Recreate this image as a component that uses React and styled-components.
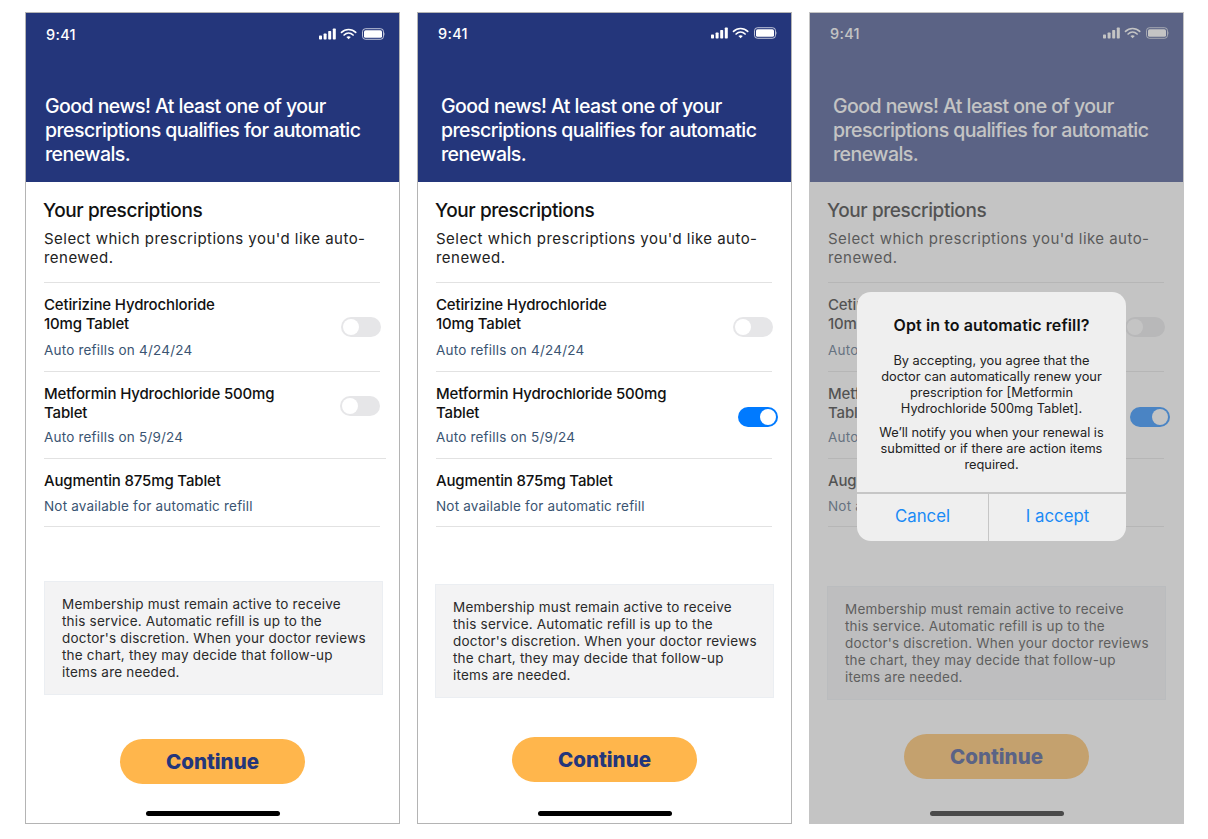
import React from 'react';
import styled, { createGlobalStyle } from 'styled-components';

const GlobalStyle = createGlobalStyle`
  * { box-sizing: border-box; }
  html, body { margin: 0; background: #fff; }
  body { font-family: Inter, "Liberation Sans", sans-serif; }
`;

const phones = [
  {
    id: 'first', statusTop: 11, headX: 19, noticeGap: 54, noticeX: 0, ctaGap: 44, homeGap: 27,
    rows: [
      { toggleX: -1, toggleTop: 34 },
      { toggleX: 6, toggleTop: 24, wide: true },
      {},
    ],
  },
  {
    id: 'second', statusTop: 10, headX: 23, noticeGap: 57, noticeX: -1, ctaGap: 39, homeGap: 29,
    rows: [
      { toggleX: -1, toggleTop: 34 },
      { toggleX: -6, toggleTop: 35, on: true },
      {},
    ],
  },
  {
    id: 'third', statusTop: 10, headX: 23, noticeGap: 59, noticeX: -1, ctaGap: 34, homeGap: 32, dimmed: true,
    rows: [
      { toggleX: -1, toggleTop: 34 },
      { toggleX: -6, toggleTop: 35, on: true },
      {},
    ],
  },
];

const drugs = [
  { name: <>Cetirizine Hydrochloride<br />10mg Tablet</>, note: 'Auto refills on 4/24/24', height: 89, noteGap: 8 },
  { name: <>Metformin Hydrochloride 500mg<br />Tablet</>, note: 'Auto refills on 5/9/24', height: 87, noteGap: 6 },
  { name: 'Augmentin 875mg Tablet', note: 'Not available for automatic refill', height: 68, noteGap: 7 },
];

const StatusIcons = () => (
  <svg width="66" height="12" viewBox="0 0 66 12" fill="none">
    <g fill="#fff">
      <rect x="0" y="7.5" width="3" height="4" rx="0.7" />
      <rect x="4.6" y="5.5" width="3" height="6" rx="0.7" />
      <rect x="9.2" y="3" width="3" height="8.5" rx="0.7" />
      <rect x="13.8" y="0.5" width="3" height="11" rx="0.7" />
    </g>
    <path d="M22.5 4.4c4-3.9 10.2-3.9 14.2 0" stroke="#fff" strokeWidth="1.7" strokeLinecap="round" />
    <path d="M25.1 7c2.6-2.4 6.4-2.4 9 0" stroke="#fff" strokeWidth="1.7" strokeLinecap="round" />
    <path d="M29.6 11.3l-2.2-2.2c1.3-1 3.1-1 4.4 0z" fill="#fff" />
    <rect x="43.5" y="0.7" width="21" height="10.6" rx="3" stroke="#fff" strokeOpacity="0.7" />
    <rect x="45" y="2.2" width="18" height="7.6" rx="1.6" fill="#fff" />
    <path d="M65.6 4.4c.7.3 .7 2.9 0 3.2z" fill="#fff" fillOpacity="0.7" />
  </svg>
);

const App = () => (
  <>
    <GlobalStyle />
    <Page>
      {phones.map((phone) => (
        <Phone key={phone.id} $dimmed={phone.dimmed}>
          <Header>
            <StatusBar $top={phone.statusTop}>
              <Clock>9:41</Clock>
              <StatusIcons />
            </StatusBar>
            <Headline $x={phone.headX} $top={81 - phone.statusTop - 20}>
              Good news! At least one of your<br />
              prescriptions qualifies for automatic<br />
              renewals.
            </Headline>
          </Header>

          <Body>
            <SectionTitle>Your prescriptions</SectionTitle>
            <SectionText>Select which prescriptions you'd like auto-renewed.</SectionText>

            <List>
              {drugs.map((drug, i) => {
                const row = phone.rows[i];
                return (
                  <Row key={drug.note} $height={drug.height} $wide={row.wide}>
                    <div>
                      <DrugName>{drug.name}</DrugName>
                      <DrugNote $gap={drug.noteGap}>{drug.note}</DrugNote>
                    </div>
                    {row.toggleTop && (
                      <Toggle $on={row.on} $top={row.toggleTop} $x={row.toggleX}>
                        <Knob />
                      </Toggle>
                    )}
                  </Row>
                );
              })}
            </List>

            <Notice $gap={phone.noticeGap} $x={phone.noticeX}>
              Membership must remain active to receive<br />
              this service. Automatic refill is up to the<br />
              doctor's discretion. When your doctor reviews<br />
              the chart, they may decide that follow-up<br />
              items are needed.
            </Notice>

            <Continue $gap={phone.ctaGap}>Continue</Continue>
            <HomeBar $gap={phone.homeGap} />
          </Body>

          {phone.dimmed && (
            <Scrim>
              <Dialog>
                <DialogBody>
                  <DialogTitle>Opt in to automatic refill?</DialogTitle>
                  <DialogText>
                    By accepting, you agree that the<br />
                    doctor can automatically renew your<br />
                    prescription for [Metformin<br />
                    Hydrochloride 500mg Tablet].
                  </DialogText>
                  <DialogText>
                    We’ll notify you when your renewal is<br />
                    submitted or if there are action items<br />
                    required.
                  </DialogText>
                </DialogBody>
                <DialogActions>
                  <DialogButton>Cancel</DialogButton>
                  <DialogButton>I accept</DialogButton>
                </DialogActions>
              </Dialog>
            </Scrim>
          )}
        </Phone>
      ))}
    </Page>
  </>
);

export default App;

const Page = styled.div`
  display: flex;
  gap: 17px;
  padding: 12px 0 0 25px;
  width: 1208px;
  height: 839px;
  overflow: hidden;
`;

const Phone = styled.div`
  position: relative;
  display: flex;
  flex-direction: column;
  width: 375px;
  height: 812px;
  border: 1px solid ${(p) => (p.$dimmed ? 'transparent' : '#b4b4b4')};
  background: #fff;
`;

const Header = styled.header`
  height: 169px;
  background: #24367b;
  color: #fff;
  flex-shrink: 0;
  display: flow-root;
`;

const StatusBar = styled.div`
  display: flex;
  align-items: center;
  justify-content: space-between;
  height: 20px;
  margin-top: ${(p) => p.$top}px;
  padding: 0 14px 0 20px;
`;

const Clock = styled.span`
  font-size: 14.5px;
  font-weight: 500;
  letter-spacing: 0.3px;
`;

const Headline = styled.h1`
  margin: ${(p) => p.$top}px 0 0;
  padding-left: ${(p) => p.$x}px;
  font-size: 19.5px;
  line-height: 24px;
  font-weight: 500;
  letter-spacing: -0.55px;
`;

const Body = styled.main`
  flex: 1;
  display: flex;
  flex-direction: column;
  padding: 18px 19px 0 18px;
`;

const SectionTitle = styled.h2`
  margin: 0 0 0 -1px;
  font-size: 19px;
  line-height: 22px;
  font-weight: 500;
  letter-spacing: -0.4px;
  color: #111;
`;

const SectionText = styled.p`
  margin: 7px 0 15px;
  font-size: 15px;
  line-height: 19px;
  letter-spacing: 0.46px;
  color: #222;
`;

const List = styled.div`
  display: flex;
  flex-direction: column;
  border-top: 1px solid #e2e2e2;
`;

const Row = styled.div`
  display: flex;
  justify-content: space-between;
  align-items: flex-start;
  height: ${(p) => p.$height}px;
  padding-top: 12px;
  border-bottom: 1px solid #e2e2e2;
  margin-right: ${(p) => (p.$wide ? '-6px' : '0')};
`;

const DrugName = styled.div`
  font-size: 15px;
  line-height: 19px;
  font-weight: 500;
  letter-spacing: -0.15px;
  color: #111;
`;

const DrugNote = styled.div`
  margin-top: ${(p) => p.$gap}px;
  font-size: 13.5px;
  line-height: 18px;
  letter-spacing: 0.2px;
  color: #3a5472;
`;

const Toggle = styled.div`
  display: flex;
  align-items: center;
  justify-content: ${(p) => (p.$on ? 'flex-end' : 'flex-start')};
  width: 40px;
  height: 20px;
  padding: 2px;
  margin-top: ${(p) => p.$top - 12}px;
  margin-right: ${(p) => p.$x}px;
  border-radius: 10px;
  background: ${(p) => (p.$on ? '#007aff' : '#e6e6e8')};
`;

const Knob = styled.span`
  display: block;
  width: 16px;
  height: 16px;
  border-radius: 50%;
  background: #fff;
`;

const Notice = styled.div`
  margin: ${(p) => p.$gap}px 0 0 ${(p) => p.$x}px;
  width: 339px;
  height: 114px;
  padding: 14px 0 0 17px;
  background: #f3f3f4;
  border: 1px solid #ebeef2;
  font-size: 13.5px;
  line-height: 17px;
  letter-spacing: 0.2px;
  color: #2a2a2a;
`;

const Continue = styled.button`
  align-self: center;
  margin: ${(p) => p.$gap}px 0 0 1px;
  width: 185px;
  height: 45px;
  flex-shrink: 0;
  border: 0;
  border-radius: 23px;
  background: #ffb64c;
  color: #24367b;
  font-family: Inter, "Liberation Sans", sans-serif;
  font-size: 20.5px;
  font-weight: 800;
`;

const HomeBar = styled.div`
  align-self: center;
  margin: ${(p) => p.$gap}px 0 0 2px;
  width: 134px;
  height: 5px;
  flex-shrink: 0;
  border-radius: 3px;
  background: #000;
`;

const Scrim = styled.div`
  position: absolute;
  inset: -1px;
  padding: 280px 0 0 48px;
  background: rgba(142, 142, 142, 0.52);
`;

const Dialog = styled.div`
  width: 269px;
  height: 249px;
  display: flex;
  flex-direction: column;
  border-radius: 14px;
  background: #efefef;
  overflow: hidden;
  text-align: center;
`;

const DialogBody = styled.div`
  flex: 1;
  padding: 23px 0 0;
`;

const DialogTitle = styled.h3`
  margin: 0 0 18px;
  font-size: 16px;
  line-height: 20px;
  font-weight: 600;
  letter-spacing: 0.1px;
  color: #111;
`;

const DialogText = styled.p`
  margin: 0 0 8px;
  font-size: 12.8px;
  line-height: 16px;
  color: #222;
`;

const DialogActions = styled.div`
  display: grid;
  grid-template-columns: 132px 1fr;
  height: 49px;
  border-top: 2px solid #c6c6c6;
`;

const DialogButton = styled.button`
  border: 0;
  padding: 0 0 4px;
  background: transparent;
  color: #1a8af5;
  font-family: Inter, "Liberation Sans", sans-serif;
  font-size: 16.8px;
  &:first-child { border-right: 1px solid #c6c6c6; }
`;
